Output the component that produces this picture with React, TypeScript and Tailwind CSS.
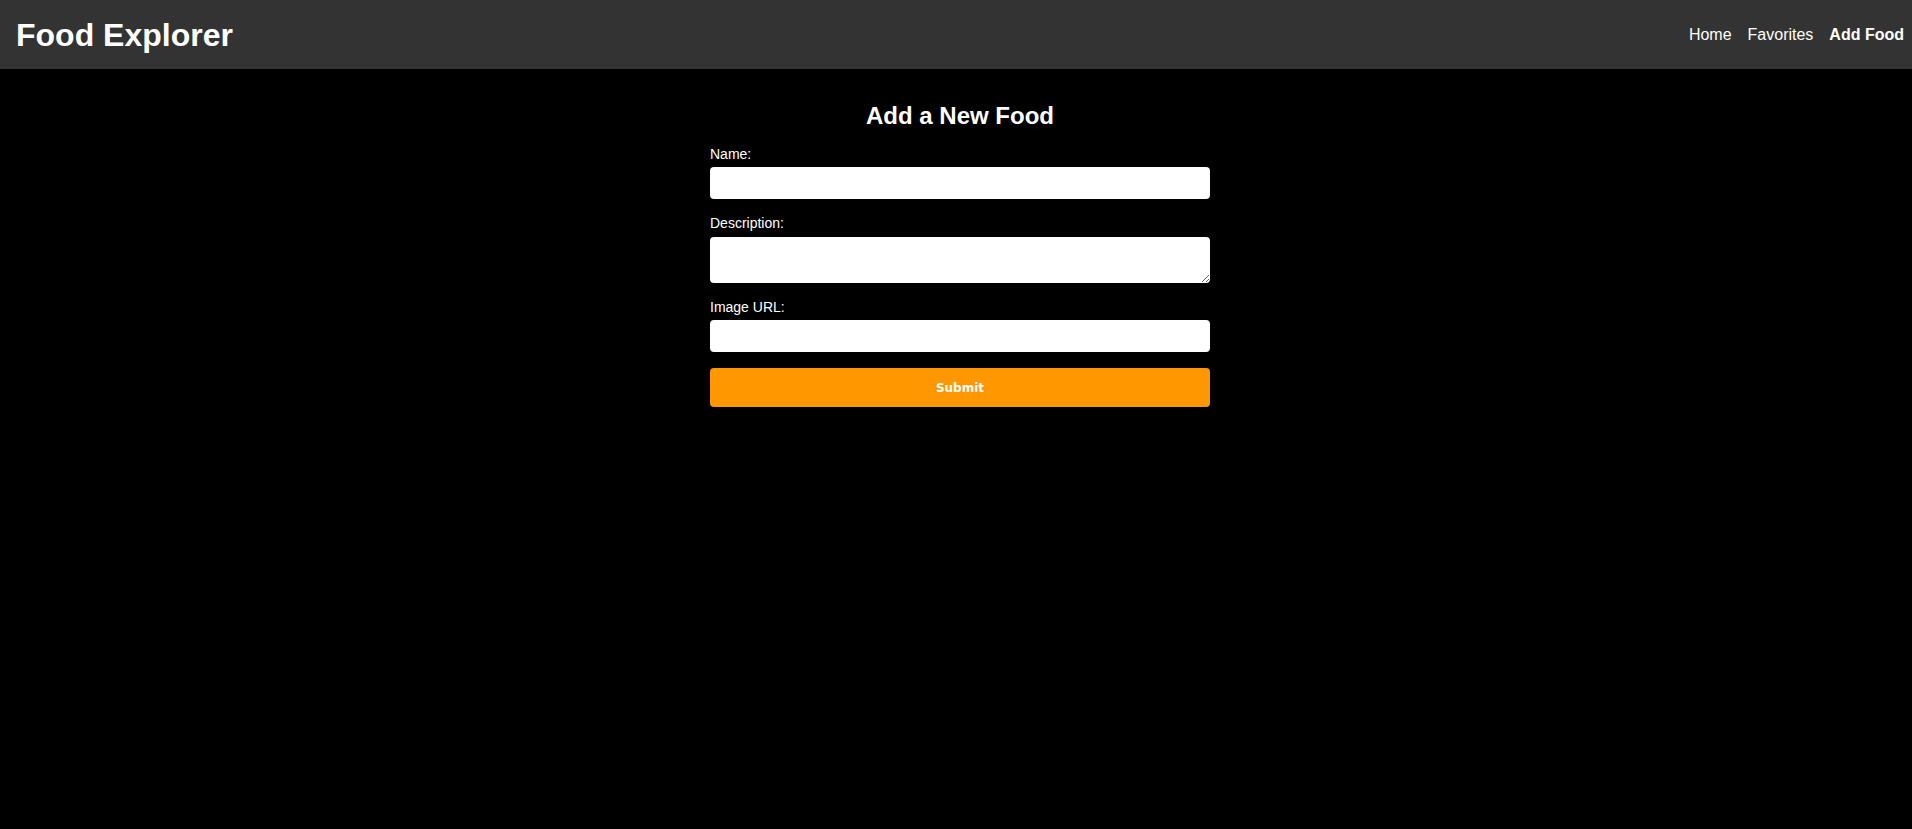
import { useState } from "react";

const sans = "font-['Liberation_Sans',Arial,sans-serif]";

function Header() {
  return (
    <header className={`flex h-[69px] items-center justify-between bg-[#333333] pl-4 pr-2 text-white ${sans}`}>
      <h1 className="text-[32px] font-bold leading-normal">Food Explorer</h1>
      <nav className="flex items-center gap-4 text-[16px] leading-normal">
        <a href="#" className="text-white">Home</a>
        <a href="#" className="text-white">Favorites</a>
        <a href="#" className="font-bold text-white">Add Food</a>
      </nav>
    </header>
  );
}

export default function App() {
  const [name, setName] = useState("");
  const [description, setDescription] = useState("");
  const [imageUrl, setImageUrl] = useState("");

  return (
    <div className={`min-h-[829px] bg-black ${sans}`}>
      <Header />
      <main className="pl-2 pt-[33px]">
        <h2 className="text-center text-[24px] font-bold leading-[28px] text-white">Add a New Food</h2>
        <form className="mx-auto mt-[16px] flex w-[500px] flex-col" onSubmit={(e) => e.preventDefault()}>
          <label htmlFor="name" className="block text-[14px] leading-[16px] text-white">Name:</label>
          <input
            id="name"
            type="text"
            value={name}
            onChange={(e) => setName(e.target.value)}
            className="mt-[5px] h-[32px] w-full rounded-[4px] border-0 bg-white px-2 text-[14px] text-black outline-none"
          />

          <label htmlFor="description" className="mt-[16px] block text-[14px] leading-[16px] text-white">Description:</label>
          <textarea
            id="description"
            value={description}
            onChange={(e) => setDescription(e.target.value)}
            className="mt-[6px] h-[46px] w-full rounded-[4px] border-0 bg-white px-2 py-1 text-[14px] text-black outline-none"
          />

          <label htmlFor="image" className="mt-[16px] block text-[14px] leading-[16px] text-white">Image URL:</label>
          <input
            id="image"
            type="text"
            value={imageUrl}
            onChange={(e) => setImageUrl(e.target.value)}
            className="mt-[5px] h-[32px] w-full rounded-[4px] border-0 bg-white px-2 text-[14px] text-black outline-none"
          />

          <button
            type="submit"
            className="mt-[16px] h-[39px] w-full rounded-[4px] bg-[#ff9800] font-['DejaVu_Sans',Verdana,sans-serif] text-[12px] font-bold text-white"
          >
            Submit
          </button>
        </form>
      </main>
    </div>
  );
}
